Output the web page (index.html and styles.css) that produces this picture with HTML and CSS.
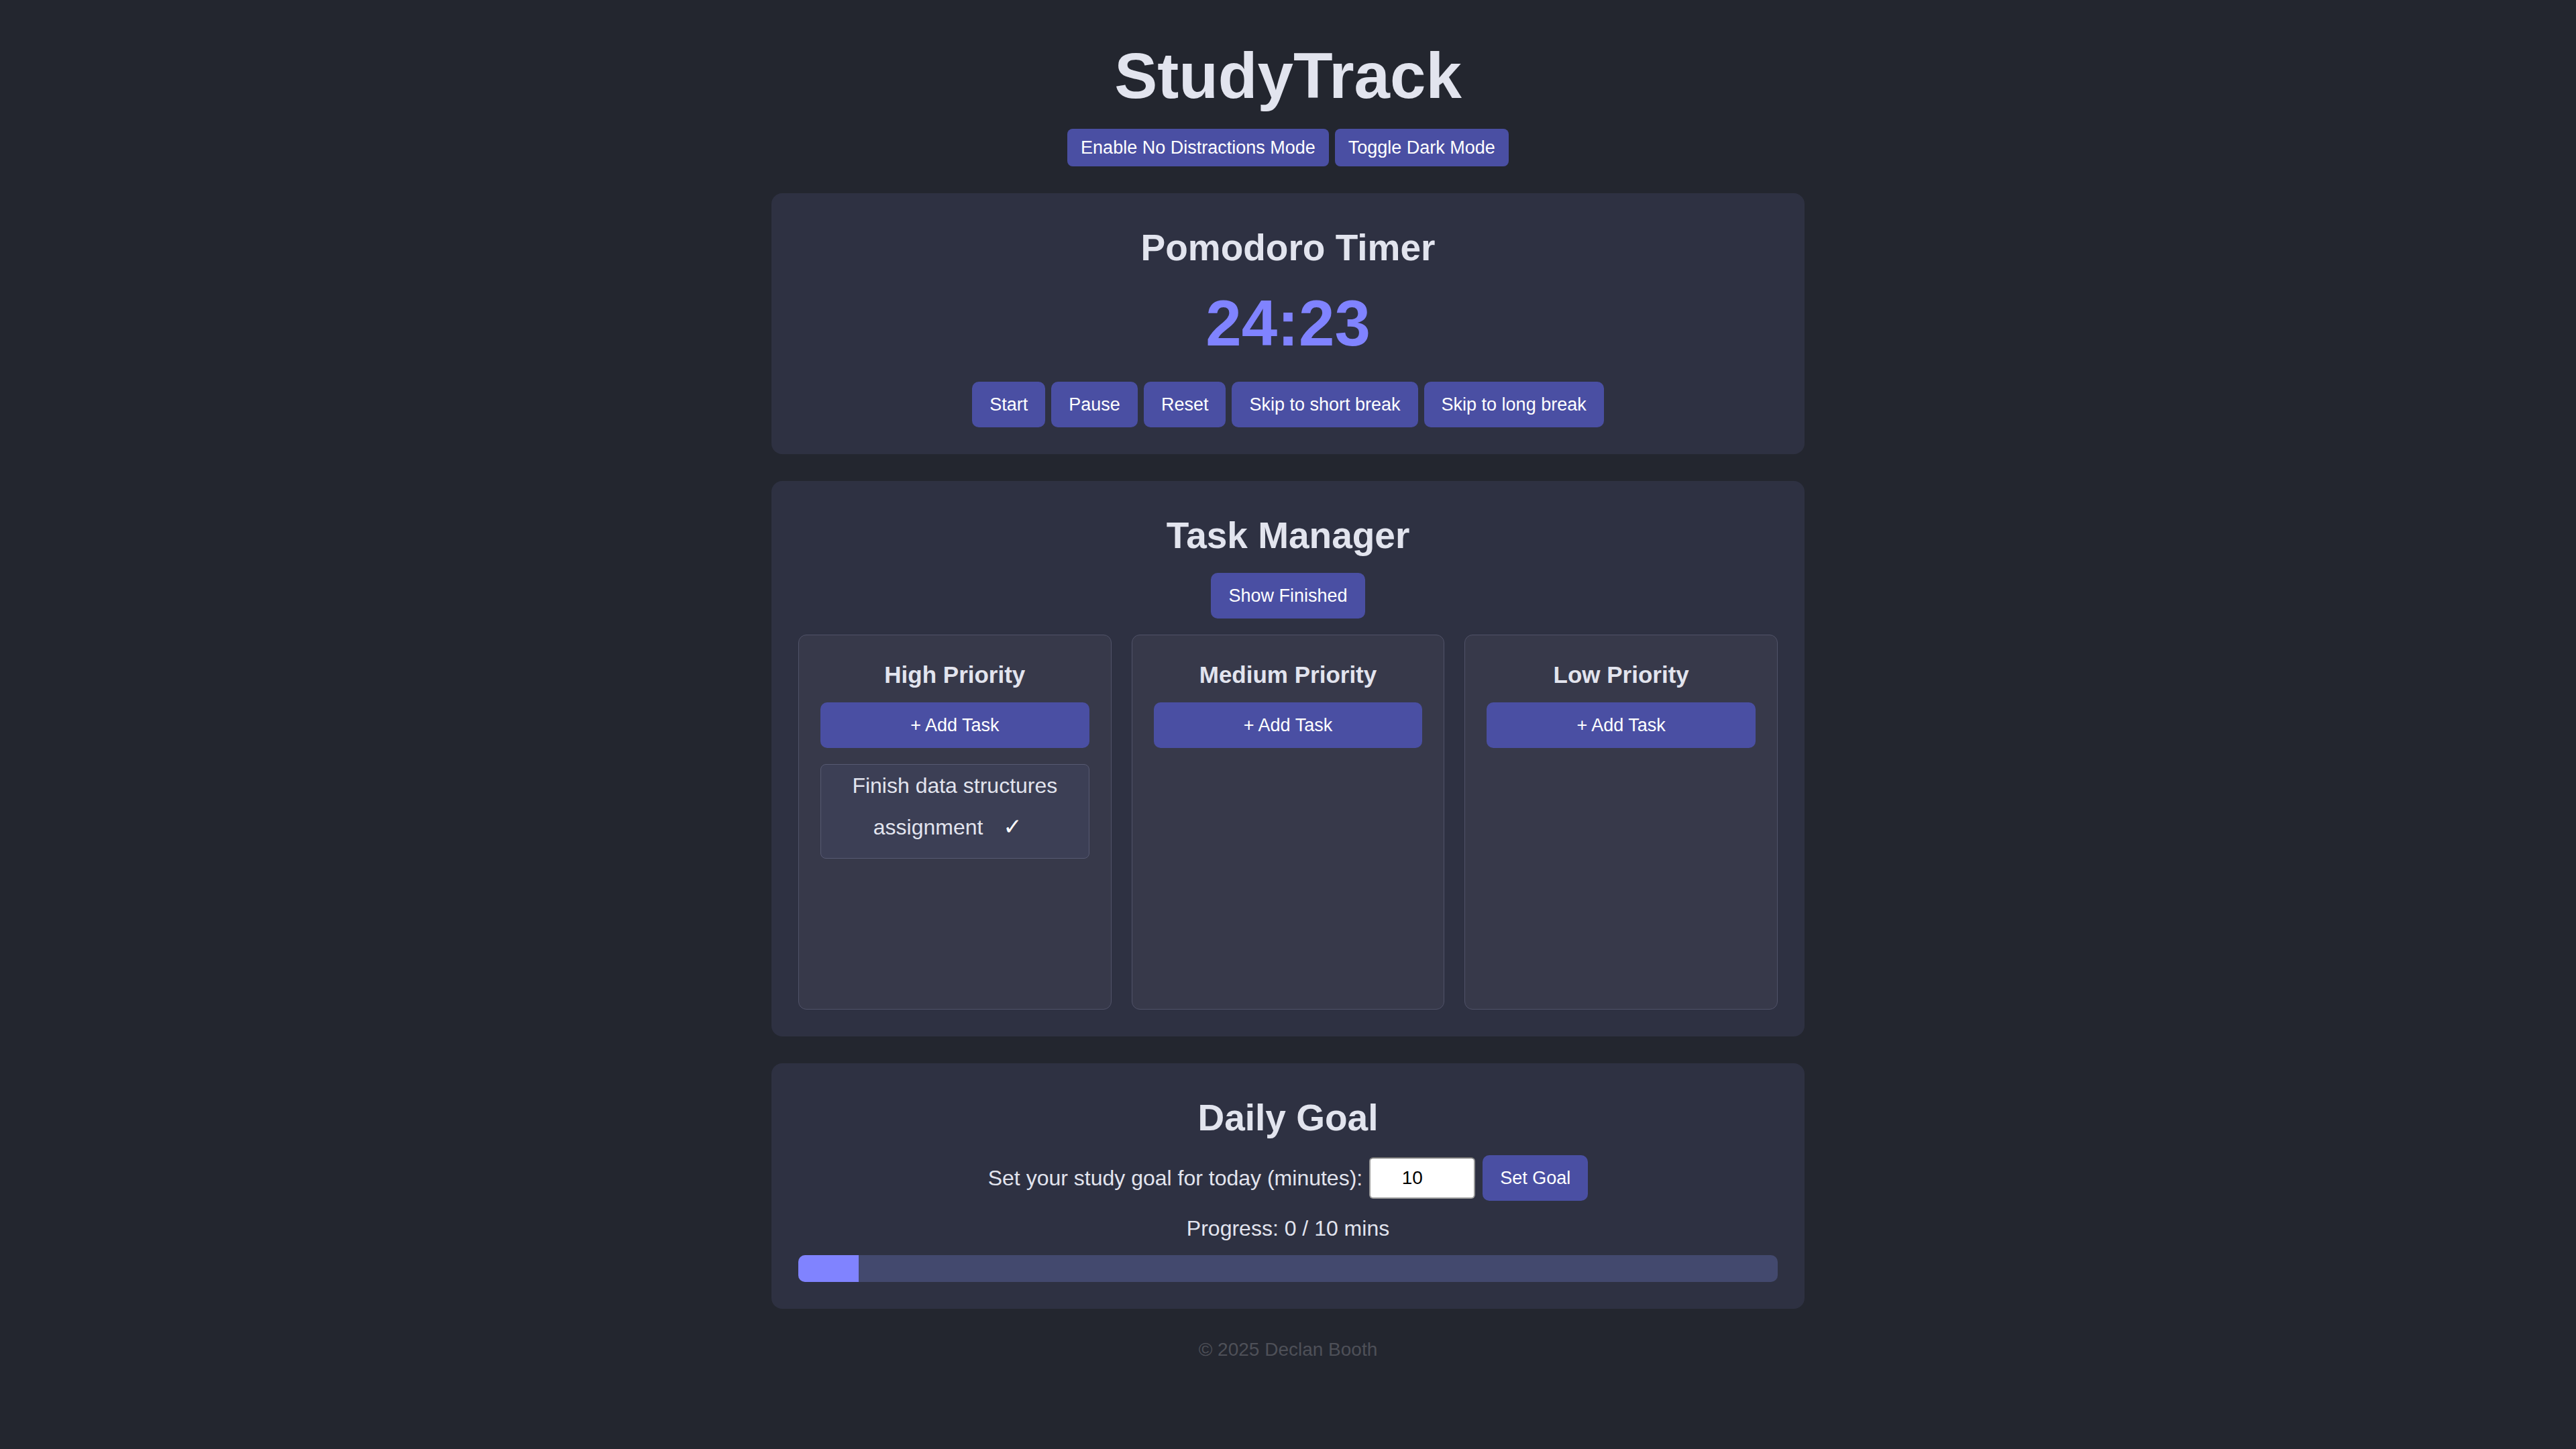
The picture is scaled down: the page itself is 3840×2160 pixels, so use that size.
FILE: index.html
```html
<!DOCTYPE html>
<html lang="en">
<head>
    <meta charset="UTF-8">
    <meta name="viewport" content="width=device-width, initial-scale=1.0">
    <link rel="stylesheet" href="styles.css">
    <title>StudyTrack</title>
</head>
<body>

    <header class="site-header">
        <h1>StudyTrack</h1>
        <div class="header-actions">
            <button class="btn btn-small" id="focusButton">Enable No Distractions Mode</button>
            <button class="btn btn-small" id="themeButton">Toggle Dark Mode</button>
        </div>
    </header>

    <main class="container">
        <!-- timer -->
        <section class="card">
            <h2>Pomodoro Timer</h2>
            <div class="timer-display" id="timerDisplay">24:23</div>
            <div class="timer-controls">
                <button class="btn">Start</button>
                <button class="btn">Pause</button>
                <button class="btn">Reset</button>
                <button class="btn">Skip to short break</button>
                <button class="btn">Skip to long break</button>
            </div>
        </section>

        <!-- tasks -->
        <section class="card">
            <h2>Task Manager</h2>
            <button class="btn show-finished">Show Finished</button>
            <div class="task-columns">
                <div class="task-column">
                    <h3>High Priority</h3>
                    <button class="btn btn-add">+ Add Task</button>
                    <ul class="task-list">
                        <li class="task-item">Finish data structures assignment <button class="complete-btn">✓</button></li>
                    </ul>
                </div>
                <div class="task-column">
                    <h3>Medium Priority</h3>
                    <button class="btn btn-add">+ Add Task</button>
                    <ul class="task-list"></ul>
                </div>
                <div class="task-column">
                    <h3>Low Priority</h3>
                    <button class="btn btn-add">+ Add Task</button>
                    <ul class="task-list"></ul>
                </div>
            </div>
        </section>

        <!-- daily goal -->
        <section class="card">
            <h2>Daily Goal</h2>
            <div class="goal-form">
                <label for="goalInput">Set your study goal for today (minutes):</label>
                <input type="text" id="goalInput" value="10">
                <button class="btn">Set Goal</button>
            </div>
            <p class="goal-progress">Progress: 0 / 10 mins</p>
            <div class="progress-bar">
                <div class="progress-fill" style="width: 90px;"></div>
            </div>
        </section>
    </main>

    <footer class="site-footer">© 2025 Declan Booth</footer>

</body>
</html>
```

FILE: styles.css
```css
body {
    font-family: "Segoe UI", "Liberation Sans", Arial, sans-serif;
    font-size: 32px;
    line-height: 40px;
    margin: 0;
    padding: 0;
    background-color: #23262f;
    color: #e2e4ee;
}

/* header */
.site-header {
    padding-top: 58px;
    text-align: center;
}

.site-header h1 {
    margin: 0;
    font-size: 96px;
    line-height: 110px;
    font-weight: bold;
}

.header-actions {
    display: flex;
    justify-content: center;
    gap: 9px;
    margin-top: 24px;
}

/* buttons */
.btn {
    font-family: inherit;
    font-size: 27px;
    line-height: 36px;
    background-color: #4a4fa3;
    color: #fff;
    border: none;
    border-radius: 10px;
    padding: 16px 26px;
    cursor: pointer;
}

.btn:hover {
    background-color: #5a5fc0;
}

.btn-small {
    padding: 10px 20px;
    border-radius: 8px;
}

/* cards */
.container {
    width: 1540px;
    margin: 40px auto 0;
    display: flex;
    flex-direction: column;
    gap: 40px;
}

.card {
    background-color: #2e3142;
    border-radius: 16px;
    padding: 40px;
    text-align: center;
}

.card h2 {
    margin: 8px 0 0;
    font-size: 55px;
    line-height: 66px;
    font-weight: bold;
}

/* timer */
.timer-display {
    margin-top: 25px;
    font-size: 96px;
    line-height: 110px;
    font-weight: bold;
    color: #8083ff;
}

.timer-controls {
    display: flex;
    justify-content: center;
    gap: 9px;
    margin-top: 32px;
}

/* tasks */
.show-finished {
    margin-top: 23px;
}

.task-columns {
    display: grid;
    grid-template-columns: repeat(3, 1fr);
    gap: 30px;
    margin-top: 24px;
    text-align: center;
}

.task-column {
    box-sizing: border-box;
    min-height: 559px;
    background-color: #37394a;
    border: 1px solid #505268;
    border-radius: 12px;
    padding: 32px;
}

.task-column h3 {
    margin: 6px 0 0;
    font-size: 35px;
    line-height: 42px;
}

.btn-add {
    display: block;
    width: 100%;
    margin-top: 20px;
}

.task-list {
    list-style: none;
    margin: 24px 0 0;
    padding: 0;
}

.task-list:empty {
    display: none;
}

.task-item {
    background-color: #3c3f55;
    border: 1px solid #575a72;
    border-radius: 8px;
    padding: 0 12px 15px;
    line-height: 62px;
}

.complete-btn {
    font-family: "DejaVu Sans", sans-serif;
    font-size: 34px;
    line-height: 40px;
    background: none;
    border: none;
    color: #fff;
    padding: 0 21px;
    cursor: pointer;
}

/* goal */
.goal-form {
    display: flex;
    justify-content: center;
    align-items: center;
    margin-top: 23px;
}

.goal-form label {
    margin-right: 10px;
}

#goalInput {
    box-sizing: border-box;
    width: 158px;
    height: 62px;
    font-family: inherit;
    font-size: 28px;
    text-align: center;
    padding: 10px 40px 10px 10px;
    border: 2px solid #9a9a9a;
    border-top-color: #767676;
    border-radius: 6px;
    background-color: #fff;
    color: #000;
    margin-right: 11px;
}

.goal-progress {
    margin: 21px 0 0;
}

.progress-bar {
    height: 40px;
    margin-top: 20px;
    background-color: #43496e;
    border-radius: 10px;
    overflow: hidden;
}

.progress-fill {
    height: 100%;
    background-color: #8083ff;
}

/* footer */
.site-footer {
    margin-top: 45px;
    text-align: center;
    font-size: 28px;
    line-height: 32px;
    color: #4e5058;
}
```
